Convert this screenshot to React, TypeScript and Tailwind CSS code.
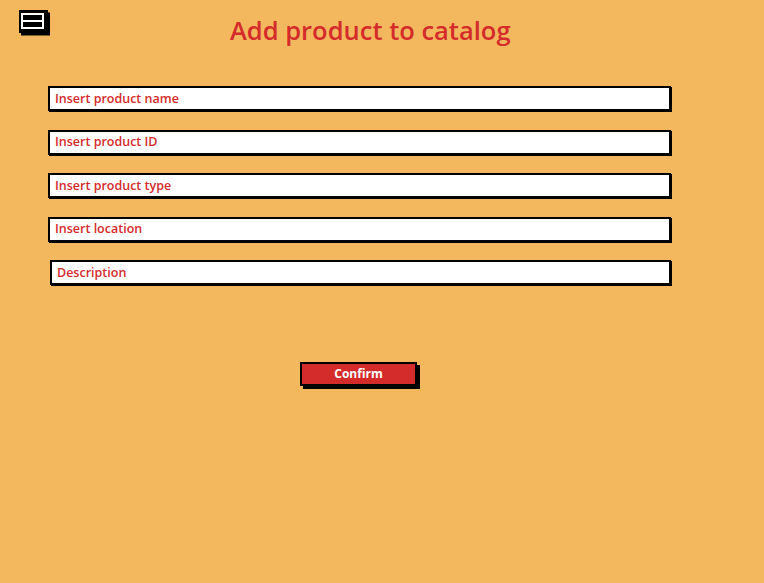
import React from "react";

const fields = [
  "Insert product name",
  "Insert product ID",
  "Insert product type",
  "Insert location",
];

function MenuIcon() {
  return (
    <svg width="32" height="26" viewBox="0 0 32 26" className="block">
      <rect x="2" y="2.5" width="29" height="23" fill="#000" />
      <rect x="0" y="0" width="29" height="23" fill="#000" />
      <rect x="3" y="4" width="21" height="14" fill="none" stroke="#fff" strokeWidth="2" />
      <line x1="3" y1="11" x2="24" y2="11" stroke="#fff" strokeWidth="2" />
    </svg>
  );
}

function Field({ label, extra }: { label: string; extra?: string }) {
  return (
    <div
      className={
        "h-[25px] bg-white border-2 border-black shadow-[1px_1px_0_#000] flex items-center pl-[5px] pt-[1px] text-[12.5px] font-semibold text-[#d42b2b] " +
        (extra ?? "")
      }
    >
      {label}
    </div>
  );
}

export default function App() {
  return (
    <div
      className="w-[764px] h-[583px] bg-[#f3b85e] flex flex-col"
      style={{ fontFamily: '"Open Sans", "Liberation Sans", sans-serif' }}
    >
      <div className="flex items-start pt-[10px] pl-[19px] h-[60px]">
        <MenuIcon />
        <h1 className="ml-[179px] mt-[2px] text-[25.5px] leading-[36px] font-semibold text-[#d42b2b]">
          Add product to catalog
        </h1>
      </div>
      <div className="ml-[48px] w-[623px] mt-[26px] flex flex-col gap-[18.5px]">
        {fields.map((f) => (
          <Field key={f} label={f} />
        ))}
        <Field label="Description" extra="ml-[2px]" />
      </div>
      <div className="ml-[48px] w-[623px] flex justify-center mt-[77px]">
        <button className="ml-[-2px] w-[117px] h-[24px] bg-[#d42b2b] border-2 border-black shadow-[3px_3px_0_#000] text-white text-[12px] font-bold">
          Confirm
        </button>
      </div>
    </div>
  );
}
